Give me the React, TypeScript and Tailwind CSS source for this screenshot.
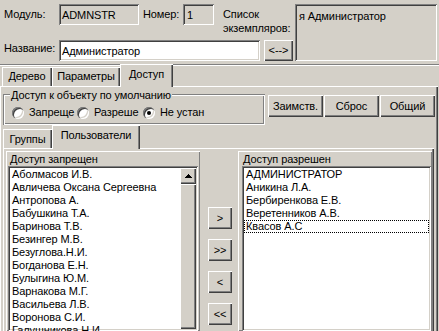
import React from "react";

const sunken =
  "shadow-[inset_1px_1px_0_#808080,inset_-1px_-1px_0_#ffffff,inset_2px_2px_0_#404040,inset_-2px_-2px_0_#d4d0c8]";
const raised =
  "shadow-[inset_1px_1px_0_#ffffff,inset_-1px_-1px_0_#404040,inset_-2px_-2px_0_#808080]";
const tabEdge =
  "shadow-[inset_1px_1px_0_#ffffff,inset_-1px_0_0_#404040,inset_-2px_0_0_#808080]";
const panelEdge = "shadow-[inset_1px_1px_0_#ffffff,inset_-1px_-1px_0_#808080]";
const etched =
  "shadow-[inset_1px_1px_0_#808080,inset_-1px_-1px_0_#ffffff,inset_2px_2px_0_#ffffff,inset_-2px_-2px_0_#808080]";

function Btn({ children, className }: { children: React.ReactNode; className: string }) {
  return (
    <div className={`${raised} bg-[#d4d0c8] flex items-center justify-center shrink-0 ${className}`}>
      {children}
    </div>
  );
}

function Radio({ checked, label, w }: { checked?: boolean; label: string; w: string }) {
  return (
    <div className={`flex items-center gap-[5px] whitespace-nowrap shrink-0 ${w}`}>
      <span className="w-[12px] h-[12px] rounded-full bg-white shrink-0 flex items-center justify-center shadow-[inset_1px_1px_0_#808080,inset_2px_2px_0_#404040,inset_-1px_-1px_0_#ffffff,inset_-2px_-2px_0_#d4d0c8]">
        {checked && <span className="w-[4px] h-[4px] rounded-full bg-black" />}
      </span>
      <span>{label}</span>
    </div>
  );
}

const leftItems = [
  "Аболмасов И.В.",
  "Авличева Оксана Сергеевна",
  "Антропова А.",
  "Бабушкина Т.А.",
  "Баринова Т.В.",
  "Безингер М.В.",
  "Безуглова.Н.И.",
  "Богданова Е.Н.",
  "Булыгина Ю.М.",
  "Варнакова М.Г.",
  "Васильева Л.В.",
  "Воронова С.И.",
  "Галушникова Н.И.",
];

const rightItems = ["АДМИНИСТРАТОР", "Аникина Л.А.", "Бербиренкова Е.В.", "Веретенников А.В.", "Квасов А.С"];

export default function App() {
  return (
    <div className="w-[439px] h-[331px] overflow-hidden bg-[#d4d0c8] text-black text-[11px] leading-[13px] tracking-[-0.1px] font-['Liberation_Sans',Arial,sans-serif] flex flex-col">
      {/* Header */}
      <div className="h-[64px] shrink-0 flex pt-[4px]">
        <div className="w-[295px] shrink-0 flex flex-col">
          <div className="h-[36px] flex items-start">
            <span className="w-[59px] shrink-0 pl-[4px] pt-[4px]">Модуль:</span>
            <div className={`${sunken} w-[80px] h-[21px] shrink-0 pl-[3px] pt-[5px]`}>ADMNSTR</div>
            <span className="w-[40px] shrink-0 ml-[4px] pt-[4px]">Номер:</span>
            <div className={`${sunken} w-[31px] h-[21px] shrink-0 pl-[4px] pt-[5px]`}>1</div>
            <div className="ml-[9px] pt-[3px] leading-[14px] whitespace-nowrap">
              <div>Список</div>
              <div>экземпляров:</div>
            </div>
          </div>
          <div className="h-[21px] flex items-start">
            <span className="w-[59px] shrink-0 pl-[4px] pt-[2px] whitespace-nowrap">Название:</span>
            <div className={`${sunken} bg-white w-[201px] h-[21px] shrink-0 pl-[3px] pt-[5px]`}>Администратор</div>
            <Btn className="ml-[4px] w-[29px] h-[21px]">&lt;--&gt;</Btn>
          </div>
        </div>
        <div className={`${sunken} w-[142px] h-[57px] pl-[4px] pt-[6px]`}>я Администратор</div>
      </div>
      <div className="h-[2px] shrink-0 border-t border-[#808080] border-b border-b-white" />

      {/* Main tabs */}
      <div className="h-[22px] shrink-0 mt-[-2px] flex items-end pl-[2px] relative z-10">
        <div className={`${tabEdge} w-[50px] h-[19px] pt-[3px] text-center`}>Дерево</div>
        <div className={`${tabEdge} w-[68px] h-[19px] pt-[3px] text-center`}>Параметры</div>
        <div className={`${tabEdge} bg-[#d4d0c8] w-[53px] h-[23px] mb-[-1px] pt-[4px] text-center`}>Доступ</div>
      </div>

      {/* Main page */}
      <div className="flex-1 min-h-0 w-[438px] flex flex-col pl-[3px] shadow-[inset_1px_1px_0_#ffffff,inset_-1px_0_0_#404040,inset_-2px_0_0_#808080]">
        <div className="flex items-start mt-[8px] h-[31px] shrink-0">
          <div className={`${etched} relative w-[262px] h-[31px] shrink-0`}>
            <span className="absolute left-[7px] -top-[5px] bg-[#d4d0c8] px-[1px] whitespace-nowrap">
              Доступ к объекту по умолчанию
            </span>
            <div className="flex pl-[9px] mt-[12px]">
              <Radio label="Запреще" w="w-[65px]" />
              <Radio label="Разреше" w="w-[66px]" />
              <Radio checked label="Не устан" w="w-[57px]" />
            </div>
          </div>
          <div className="flex gap-[1px] ml-[3px] mt-[1px]">
            <Btn className="w-[55px] h-[22px]">Заимств.</Btn>
            <Btn className="w-[55px] h-[22px]">Сброс</Btn>
            <Btn className="w-[55px] h-[22px]">Общий</Btn>
          </div>
        </div>

        {/* Sub tabs */}
        <div className="h-[23px] shrink-0 flex items-end relative z-10">
          <div className={`${tabEdge} w-[49px] h-[19px] pt-[4px] text-center`}>Группы</div>
          <div className={`${tabEdge} bg-[#d4d0c8] w-[88px] h-[24px] mb-[-1px] pt-[4px] text-center`}>
            Пользователи
          </div>
        </div>

        {/* Sub page */}
        <div className="flex-1 min-h-0 w-[431px] flex pt-[3px] pl-[3px] shadow-[inset_1px_1px_0_#ffffff,inset_-1px_0_0_#404040,inset_-2px_0_0_#808080]">
          {/* Left panel */}
          <div className={`${panelEdge} w-[194px] shrink-0 flex flex-col pt-[2px] px-[2px]`}>
            <div className="h-[13px] pl-[2px] shrink-0">Доступ запрещен</div>
            <div className={`${sunken} bg-white flex-1 min-h-0 flex p-[2px] overflow-hidden`}>
              <div className="flex-1 min-w-0">
                {leftItems.map((t) => (
                  <div key={t} className="h-[13px] pl-[2px] whitespace-nowrap">
                    {t}
                  </div>
                ))}
              </div>
              <div className="w-[16px] shrink-0 flex flex-col">
                <div className={`${raised} bg-[#d4d0c8] h-[16px] shrink-0 flex items-center justify-center`}>
                  <svg width="7" height="4" viewBox="0 0 7 4">
                    <path d="M3 0h1v1h1v1h1v1h1v1H0V3h1V2h1V1h1z" fill="#000" />
                  </svg>
                </div>
                <div className={`${raised} bg-[#d4d0c8] flex-1`} />
              </div>
            </div>
          </div>

          {/* Middle buttons */}
          <div className="w-[38px] shrink-0 flex flex-col gap-[10px] pt-[56px] pl-[8px]">
            <Btn className="w-[24px] h-[22px]">&gt;</Btn>
            <Btn className="w-[24px] h-[22px]">&gt;&gt;</Btn>
            <Btn className="w-[24px] h-[22px]">&lt;</Btn>
            <Btn className="w-[24px] h-[22px]">&lt;&lt;</Btn>
          </div>

          {/* Right panel */}
          <div className={`${panelEdge} w-[194px] shrink-0 flex flex-col pt-[2px] pl-[4px] pr-[1px]`}>
            <div className="h-[13px] pl-[1px] shrink-0">Доступ разрешен</div>
            <div className={`${sunken} bg-white flex-1 min-h-0 p-[2px] overflow-hidden`}>
              {rightItems.map((t, i) => (
                <div
                  key={t}
                  className={`h-[13px] leading-[11px] pl-[1px] whitespace-nowrap border ${
                    i === rightItems.length - 1 ? "border-dotted border-black" : "border-transparent"
                  }`}
                >
                  {t}
                </div>
              ))}
            </div>
          </div>
        </div>
      </div>
    </div>
  );
}
